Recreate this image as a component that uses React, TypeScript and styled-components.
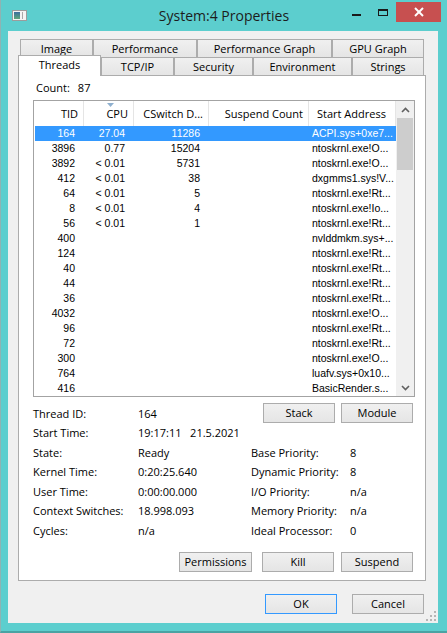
import React from "react";
import styled, { createGlobalStyle } from "styled-components";

const GlobalStyle = createGlobalStyle`
  html, body {
    margin: 0;
    padding: 0;
    width: 447px;
    height: 633px;
    overflow: hidden;
    background: #5ccece;
  }
  * { box-sizing: border-box; }
`;

const UI = `"Open Sans", "Noto Sans", sans-serif`;
const LIST = `"Liberation Sans", Arial, sans-serif`;

const Window = styled.div`
  width: 447px;
  height: 633px;
  background: #5ccece;
  border-left: 1px solid #8fb3b3;
  border-bottom: 2px solid #4aa3a3;
  display: flex;
  flex-direction: column;
  font-family: ${UI};
  font-size: 11px;
  color: #000;
`;

const TitleBar = styled.div`
  height: 31px;
  flex: none;
  display: grid;
  grid-template-columns: 1fr auto 1fr;
  align-items: start;
`;

const TitleIcon = styled.div`
  padding: 10px 0 0 11px;
  line-height: 0;
`;

const TitleText = styled.div`
  font-family: ${UI};
  font-size: 14px;
  line-height: 31px;
  color: #1c1c1c;
  white-space: nowrap;
`;

const Controls = styled.div`
  display: flex;
  justify-content: flex-end;
  padding: 2px 6px 0 0;
`;

const CtlButton = styled.div<{ $w: number; $close?: boolean }>`
  width: ${(p) => p.$w}px;
  height: 20px;
  background: ${(p) => (p.$close ? "#c75050" : "transparent")};
  line-height: 0;
`;

const Client = styled.div`
  flex: 1;
  margin: 0 9px 8px 7px;
  background: #f0f0f0;
  padding: 8px 12px 0 10px;
  display: flex;
  flex-direction: column;
  position: relative;
`;

const TabStrip = styled.div`
  display: flex;
  flex-direction: column;
  padding: 0 2px;
`;

const TabRow = styled.div`
  display: flex;
  height: 18px;
`;

const Tab = styled.div<{ $w: number; $active?: boolean }>`
  width: ${(p) => p.$w + (p.$active ? 2 : 0)}px;
  height: ${(p) => (p.$active ? 21 : 18)}px;
  margin: ${(p) => (p.$active ? "-2px 0 -1px -2px" : "0")};
  position: relative;
  z-index: ${(p) => (p.$active ? 2 : 1)};
  border: 1px solid #acacac;
  border-bottom: none;
  background: ${(p) =>
    p.$active ? "#ffffff" : "linear-gradient(#f0f0f0, #e5e5e5)"};
  display: flex;
  align-items: center;
  justify-content: center;
  padding-bottom: ${(p) => (p.$active ? 4 : 1)}px;
  white-space: nowrap;
`;

const Panel = styled.div`
  height: 506px;
  flex: none;
  border: 1px solid #acacac;
  background: #fff;
  padding: 0 10px 0 14px;
  display: flex;
  flex-direction: column;
`;

const CountRow = styled.div`
  height: 24px;
  display: flex;
  align-items: center;
  padding: 0 0 2px 3px;
  gap: 8px;
`;

const ListBox = styled.div`
  height: 297px;
  border: 1px solid #a3a3a3;
  display: flex;
  flex: none;
`;

const ListMain = styled.div`
  width: 362px;
  display: flex;
  flex-direction: column;
  overflow: hidden;
`;

const cols = "50px 50px 75px 100px 87px";

const Header = styled.div`
  height: 25px;
  display: grid;
  grid-template-columns: ${cols};
  flex: none;
`;

const HeaderCell = styled.div<{ $left?: boolean }>`
  position: relative;
  border-right: 1px solid #e5e5e5;
  display: flex;
  align-items: center;
  justify-content: ${(p) => (p.$left ? "flex-start" : "flex-end")};
  padding: ${(p) => (p.$left ? "0 0 0 8px" : "0 5px 0 0")};
  white-space: nowrap;
  overflow: hidden;
`;

const SortArrow = styled.svg`
  position: absolute;
  top: 2px;
  left: 23px;
`;

const Row = styled.div<{ $sel?: boolean }>`
  height: 15px;
  flex: none;
  display: grid;
  grid-template-columns: 49px 50px 75px 100px 87px;
  margin-left: 1px;
  background: ${(p) => (p.$sel ? "#3399ff" : "transparent")};
  color: ${(p) => (p.$sel ? "#fff" : "#000")};
  font-family: ${LIST};
  font-size: 10.5px;
  line-height: 15px;
`;

const Cell = styled.div<{ $left?: boolean }>`
  text-align: ${(p) => (p.$left ? "left" : "right")};
  padding: ${(p) => (p.$left ? "0 0 0 3px" : "0 9px 0 0")};
  white-space: nowrap;
  overflow: hidden;
`;

const ScrollBar = styled.div`
  width: 18px;
  background: #f0f0f0;
  display: flex;
  flex-direction: column;
  border-left: 1px solid #f0f0f0;
`;

const ScrollArrow = styled.div`
  height: 17px;
  flex: none;
  display: flex;
  align-items: center;
  justify-content: center;
`;

const Thumb = styled.div`
  height: 52px;
  flex: none;
  background: #cdcdcd;
  margin: 0 1px 0 0;
`;

const Track = styled.div`
  flex: 1;
`;

const Details = styled.div`
  margin-top: 6px;
  display: grid;
  grid-template-columns: 105px 113px 99px 1fr;
  grid-template-rows: 20px repeat(6, 19.5px);
  align-items: center;
  white-space: pre;
`;

const ButtonGroup = styled.div`
  grid-column: 3 / 5;
  display: flex;
  justify-content: flex-end;
  gap: 6px;
  padding-right: 2px;
`;

const Button = styled.button<{ $w: number; $default?: boolean; $extra?: number }>`
  width: ${(p) => p.$w}px;
  height: 20px;
  margin-right: ${(p) => p.$extra ?? 0}px;
  border: 1px solid ${(p) => (p.$default ? "#3399ff" : "#acacac")};
  background: linear-gradient(#f0f0f0, #e5e5e5);
  font-family: ${UI};
  font-size: 11px;
  color: #000;
  padding: 0 0 1px;
  border-radius: 0;
  line-height: 1;
`;

const ActionRow = styled.div`
  margin-top: 12px;
  display: flex;
  justify-content: flex-end;
  gap: 7px;
  padding-right: 2px;
`;

const Footer = styled.div`
  margin-top: 13px;
  display: flex;
  justify-content: flex-end;
  gap: 15px;
  padding-right: 2px;
`;

const Grip = styled.svg`
  position: absolute;
  right: 2px;
  bottom: 2px;
`;

const SA = {
  acpi: "ACPI.sys+0xe7...",
  o: "ntoskrnl.exe!O...",
  rt: "ntoskrnl.exe!Rt...",
  io: "ntoskrnl.exe!Io...",
};

const rows: [string, string, string, string, string][] = [
  ["164", "27.04", "11286", "", SA.acpi],
  ["3896", "0.77", "15204", "", SA.o],
  ["3892", "< 0.01", "5731", "", SA.o],
  ["412", "< 0.01", "38", "", "dxgmms1.sys!V..."],
  ["64", "< 0.01", "5", "", SA.rt],
  ["8", "< 0.01", "4", "", SA.io],
  ["56", "< 0.01", "1", "", SA.rt],
  ["400", "", "", "", "nvlddmkm.sys+..."],
  ["124", "", "", "", SA.rt],
  ["40", "", "", "", SA.rt],
  ["44", "", "", "", SA.rt],
  ["36", "", "", "", SA.rt],
  ["4032", "", "", "", SA.o],
  ["96", "", "", "", SA.rt],
  ["72", "", "", "", SA.rt],
  ["300", "", "", "", SA.o],
  ["764", "", "", "", "luafv.sys+0x10..."],
  ["416", "", "", "", "BasicRender.s..."],
];

const pairs: [string, string, string, string][] = [
  ["State:", "Ready", "Base Priority:", "8"],
  ["Kernel Time:", "0:20:25.640", "Dynamic Priority:", "8"],
  ["User Time:", "0:00:00.000", "I/O Priority:", "n/a"],
  ["Context Switches:", "18.998.093", "Memory Priority:", "n/a"],
  ["Cycles:", "n/a", "Ideal Processor:", "0"],
];

const Chevron = ({ up }: { up?: boolean }) => (
  <svg width="9" height="6" viewBox="0 0 9 6">
    <polyline
      points={up ? "1,5 4.5,1.5 8,5" : "1,1 4.5,4.5 8,1"}
      fill="none"
      stroke="#606060"
      strokeWidth="1.6"
    />
  </svg>
);

export default function App() {
  return (
    <>
      <GlobalStyle />
      <Window>
        <TitleBar>
          <TitleIcon>
            <svg width="15" height="11" viewBox="0 0 15 11">
              <defs>
                <linearGradient id="ig" x1="0" y1="0" x2="0" y2="1">
                  <stop offset="0" stopColor="#3b6f9e" />
                  <stop offset="1" stopColor="#5fa77a" />
                </linearGradient>
              </defs>
              <rect x="0.5" y="0.5" width="14" height="10" fill="#f4f4f4" stroke="#9c9c9c" />
              <rect x="2" y="2" width="6" height="7" fill="url(#ig)" />
              <rect x="10" y="2" width="1" height="7" fill="#a8a8a8" />
            </svg>
          </TitleIcon>
          <TitleText>System:4 Properties</TitleText>
          <Controls>
            <CtlButton $w={26}>
              <svg width="26" height="20">
                <rect x="8" y="12" width="9" height="2" fill="#1a1a1a" />
              </svg>
            </CtlButton>
            <CtlButton $w={26}>
              <svg width="26" height="20">
                <rect x="8.5" y="7.5" width="9" height="6" fill="none" stroke="#1a1a1a" />
                <rect x="8" y="7" width="10" height="2" fill="#1a1a1a" />
              </svg>
            </CtlButton>
            <CtlButton $w={45} $close>
              <svg width="45" height="20">
                <line x1="19" y1="6" x2="27" y2="14" stroke="#fff" strokeWidth="2" />
                <line x1="27" y1="6" x2="19" y2="14" stroke="#fff" strokeWidth="2" />
              </svg>
            </CtlButton>
          </Controls>
        </TitleBar>

        <Client>
          <TabStrip>
            <TabRow>
              <Tab $w={73}>Image</Tab>
              <Tab $w={104}>Performance</Tab>
              <Tab $w={135}>Performance Graph</Tab>
              <Tab $w={92}>GPU Graph</Tab>
            </TabRow>
            <TabRow>
              <Tab $w={81} $active>Threads</Tab>
              <Tab $w={73}>TCP/IP</Tab>
              <Tab $w={79}>Security</Tab>
              <Tab $w={99}>Environment</Tab>
              <Tab $w={72}>Strings</Tab>
            </TabRow>
          </TabStrip>

          <Panel>
            <CountRow>
              <span>Count:</span>
              <span>87</span>
            </CountRow>

            <ListBox>
              <ListMain>
                <Header>
                  <HeaderCell>TID</HeaderCell>
                  <HeaderCell>
                    <SortArrow width="7" height="4" viewBox="0 0 7 4">
                      <polygon points="0,0 7,0 3.5,4" fill="#8fb0cf" />
                    </SortArrow>
                    CPU
                  </HeaderCell>
                  <HeaderCell>CSwitch D...</HeaderCell>
                  <HeaderCell>Suspend Count</HeaderCell>
                  <HeaderCell $left>Start Address</HeaderCell>
                </Header>
                {rows.map((r, i) => (
                  <Row key={i} $sel={i === 0}>
                    <Cell>{r[0]}</Cell>
                    <Cell>{r[1]}</Cell>
                    <Cell>{r[2]}</Cell>
                    <Cell>{r[3]}</Cell>
                    <Cell $left>{r[4]}</Cell>
                  </Row>
                ))}
              </ListMain>
              <ScrollBar>
                <ScrollArrow>
                  <Chevron up />
                </ScrollArrow>
                <Thumb />
                <Track />
                <ScrollArrow>
                  <Chevron />
                </ScrollArrow>
              </ScrollBar>
            </ListBox>

            <Details>
              <span>Thread ID:</span>
              <span>164</span>
              <ButtonGroup>
                <Button $w={72}>Stack</Button>
                <Button $w={72}>Module</Button>
              </ButtonGroup>
              <span>Start Time:</span>
              <span>{"19:17:11   21.5.2021"}</span>
              <span />
              <span />
              {pairs.map((p) => (
                <React.Fragment key={p[0]}>
                  <span>{p[0]}</span>
                  <span>{p[1]}</span>
                  <span>{p[2]}</span>
                  <span>{p[3]}</span>
                </React.Fragment>
              ))}
            </Details>

            <ActionRow>
              <Button $w={73} $extra={3}>Permissions</Button>
              <Button $w={72}>Kill</Button>
              <Button $w={72}>Suspend</Button>
            </ActionRow>
          </Panel>

          <Footer>
            <Button $w={72} $default>OK</Button>
            <Button $w={72}>Cancel</Button>
          </Footer>

          <Grip width="10" height="10" viewBox="0 0 10 10">
            {[
              [8, 0],
              [4, 4],
              [8, 4],
              [0, 8],
              [4, 8],
              [8, 8],
            ].map(([x, y], i) => (
              <rect key={i} x={x} y={y} width="2" height="2" fill="#b5b5b5" />
            ))}
          </Grip>
        </Client>
      </Window>
    </>
  );
}
